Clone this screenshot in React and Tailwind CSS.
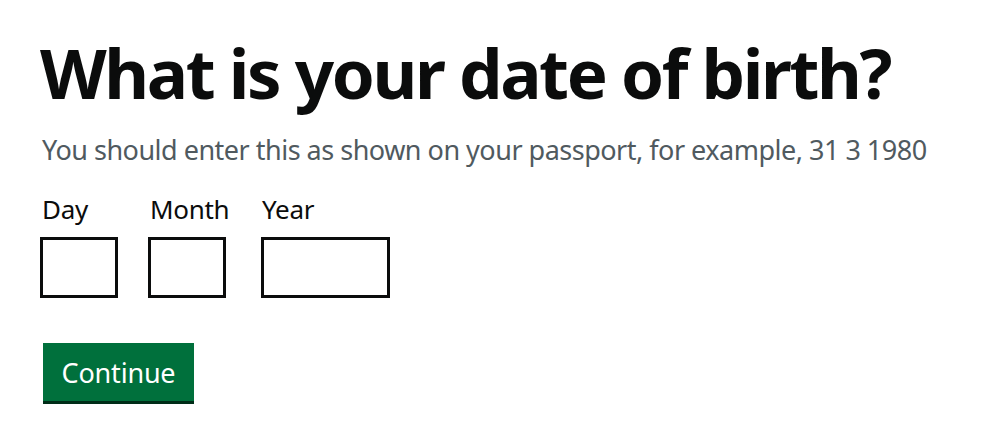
export default function App() {
  return (
    <div className="min-h-screen bg-white pl-[40px] pt-[38px]" style={{ fontFamily: '"Noto Sans", Arial, sans-serif' }}>
      <h1 className="text-[69px] font-bold leading-[68px] text-[#0b0c0c] tracking-[-2.4px]">What is your date of birth?</h1>
      <p className="mt-[26px] text-[27px] leading-[36px] text-[#505a5f] tracking-[-0.5px] pl-[2px]">
        You should enter this as shown on your passport, for example, 31 3 1980
      </p>
      <div className="mt-[23px] flex gap-[30px]">
        <div className="flex w-[78px] flex-col">
          <label className="pl-[2px] text-[26px] leading-[36px] text-[#0b0c0c] tracking-[-0.3px]">Day</label>
          <input className="mt-[10px] h-[61px] w-[78px] border-[3px] border-[#0b0c0c] bg-white" />
        </div>
        <div className="flex w-[83px] flex-col">
          <label className="pl-[2px] text-[26px] leading-[36px] text-[#0b0c0c] tracking-[-0.3px]">Month</label>
          <input className="mt-[10px] h-[61px] w-[78px] border-[3px] border-[#0b0c0c] bg-white" />
        </div>
        <div className="flex w-[129px] flex-col">
          <label className="pl-[1px] text-[26px] leading-[36px] text-[#0b0c0c] tracking-[-0.3px]">Year</label>
          <input className="mt-[10px] h-[61px] w-[129px] border-[3px] border-[#0b0c0c] bg-white" />
        </div>
      </div>
      <button className="mt-[45px] ml-[3px] h-[58px] w-[151px] bg-[#00703c] pt-[2px] text-[27px] text-white tracking-[-0.2px] shadow-[0_3px_0_#002d18]">
        Continue
      </button>
    </div>
  );
}
